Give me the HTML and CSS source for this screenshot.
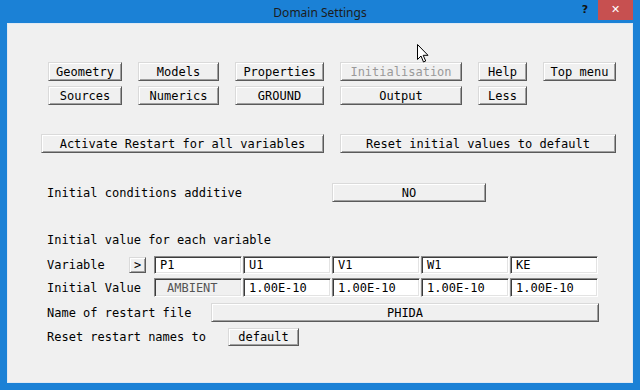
FILE: index.html
```html
<!DOCTYPE html>
<html>
<head>
    <title>Domain Settings</title>
    <link rel="stylesheet" href="styles.css">
</head>
<body>

<div class="window">
    <div class="titlebar">
        <div></div>
        <div class="title">Domain Settings</div>
        <div class="controls">
            <span class="help-btn">?</span>
            <span class="close-btn">&#x2715;</span>
        </div>
    </div>

    <div class="client">
        <!-- top menu buttons -->
        <div class="menu">
            <button class="btn">Geometry</button>
            <button class="btn">Models</button>
            <button class="btn">Properties</button>
            <button class="btn disabled">Initialisation</button>
            <button class="btn">Help</button>
            <button class="btn">Top menu</button>
            <button class="btn">Sources</button>
            <button class="btn">Numerics</button>
            <button class="btn">GROUND</button>
            <button class="btn">Output</button>
            <button class="btn">Less</button>
        </div>

        <div class="restart-row">
            <button class="btn activate">Activate Restart for all variables</button>
            <button class="btn reset">Reset initial values to default</button>
        </div>

        <div class="row additive">
            <span class="label w-additive">Initial conditions additive</span>
            <button class="btn no-btn">NO</button>
        </div>

        <div class="section-title">Initial value for each variable</div>

        <div class="row var-row">
            <span class="label w-var">Variable</span>
            <button class="btn arrow">&gt;</button>
            <div class="fields">
                <span class="field">P1</span>
                <span class="field">U1</span>
                <span class="field">V1</span>
                <span class="field">W1</span>
                <span class="field">KE</span>
            </div>
        </div>

        <div class="row val-row">
            <span class="label w-val">Initial Value</span>
            <div class="fields">
                <span class="field grey">AMBIENT</span>
                <span class="field">1.00E-10</span>
                <span class="field">1.00E-10</span>
                <span class="field">1.00E-10</span>
                <span class="field">1.00E-10</span>
            </div>
        </div>

        <div class="row name-row">
            <span class="label w-name">Name of restart file</span>
            <button class="btn phida">PHIDA</button>
        </div>

        <div class="row reset-row">
            <span class="label w-reset">Reset restart names to</span>
            <button class="btn default-btn">default</button>
        </div>
    </div>

    <!-- mouse pointer -->
    <svg class="cursor" width="13" height="20" viewBox="0 0 13 20">
        <path d="M0.5 0.5 L0.5 15.5 L4 12 L6.5 18 L8.7 17 L6.2 11.3 L11 11.3 Z" fill="#fff" stroke="#000" stroke-width="1"/>
    </svg>
</div>

</body>
</html>
```

FILE: styles.css
```css
body {
    margin: 0;
    padding: 0;
    font-family: "DejaVu Sans Mono", monospace;
    font-size: 12px;
}

.window {
    position: relative;
    width: 640px;
    height: 390px;
    background-color: #1b81d6;
    display: flex;
    flex-direction: column;
    box-sizing: border-box;
}

/* title bar */
.titlebar {
    height: 23px;
    display: grid;
    grid-template-columns: 1fr auto 1fr;
    align-items: start;
}

.title {
    font-family: "Noto Sans", sans-serif;
    font-size: 12px;
    color: #1c1c1c;
    line-height: 25px;
}

.controls {
    justify-self: end;
    display: flex;
    margin-right: 7px;
}

.help-btn {
    width: 26px;
    height: 20px;
    line-height: 19px;
    text-align: center;
    font-family: "DejaVu Sans", sans-serif;
    font-weight: bold;
    font-size: 11px;
    color: #111;
}

.close-btn {
    width: 35px;
    height: 20px;
    line-height: 20px;
    text-align: center;
    background-color: #c75050;
    color: #fff;
    font-family: "DejaVu Sans", sans-serif;
    font-weight: bold;
    font-size: 11px;
}

/* client area */
.client {
    flex: 1;
    margin: 0 7px 7px 7px;
    background-color: #f0f0f0;
    border: 1px solid #dfe9f3;
    display: flex;
    flex-direction: column;
    align-items: flex-start;
}

.btn {
    font-family: "DejaVu Sans Mono", monospace;
    font-size: 12px;
    color: #000;
    background-color: #f0f0f0;
    border: 1px solid;
    border-color: #dadada #5a5a5a #5a5a5a #dadada;
    box-shadow: inset 1px 1px #fff, inset -1px -1px #a0a0a0;
    padding: 0;
    margin: 0;
    height: 19px;
    text-align: center;
    cursor: pointer;
}

.btn.disabled {
    color: #9a9a9a;
}

.menu {
    margin: 38px 0 0 40px;
    display: grid;
    grid-template-columns: 74px 81px 89px 122px 49px 73px;
    grid-auto-rows: 19px;
    column-gap: 16px;
    row-gap: 5px;
}

.restart-row {
    margin: 29px 0 0 33px;
    display: flex;
    gap: 16px;
}

.activate {
    width: 283px;
}

.reset {
    width: 276px;
}

.row {
    display: flex;
    align-items: center;
    margin-left: 39px;
}

.label {
    color: #000;
    white-space: pre;
}

.additive {
    margin-top: 30px;
}

.w-additive { width: 285px; }
.w-var { width: 82px; }
.w-val { width: 107px; }
.w-name { width: 164px; }
.w-reset { width: 181px; }

.no-btn {
    width: 154px;
}

.section-title {
    margin: 30px 0 0 39px;
    line-height: 16px;
}

.var-row {
    margin-top: 8px;
    height: 18px;
}

.arrow {
    width: 17px;
    height: 16px;
    margin-right: 8px;
    line-height: 12px;
}

.fields {
    display: flex;
    gap: 1px;
}

.field {
    width: 88px;
    height: 18px;
    box-sizing: border-box;
    background-color: #fff;
    border: 1px solid;
    border-color: #8a8a8a #fff #fff #8a8a8a;
    box-shadow: inset 1px 1px #3c3c3c, inset -1px -1px #e3e3e3;
    padding-left: 5px;
    line-height: 17px;
    color: #000;
}

.val-row {
    margin-top: 4px;
}

.val-row .field {
    height: 19px;
    line-height: 18px;
}

.field.grey {
    background-color: #f0f0f0;
    color: #555;
    padding-left: 12px;
}

.name-row {
    margin-top: 6px;
}

.phida {
    width: 388px;
}

.reset-row {
    margin-top: 6px;
}

.default-btn {
    width: 71px;
    height: 18px;
}

.cursor {
    position: absolute;
    left: 417px;
    top: 44px;
}
```
